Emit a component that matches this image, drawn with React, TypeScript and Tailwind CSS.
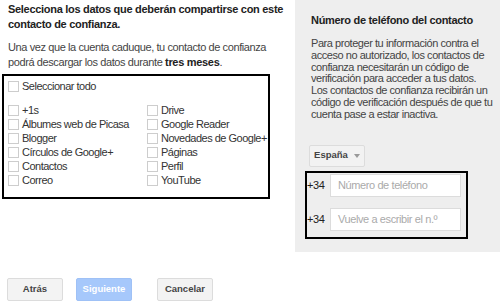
import React from "react";

const Box = () => (
  <span className="inline-block w-[11px] h-[11px] border border-[#cdcdcd] bg-white shrink-0" />
);

const Item = ({ label }: { label: string }) => (
  <div className="flex items-center h-[14px] gap-[3px] whitespace-nowrap">
    <Box />
    <span className="leading-[14px]">{label}</span>
  </div>
);

export default function App() {
  const col1 = ["+1s", "Álbumes web de Picasa", "Blogger", "Círculos de Google+", "Contactos", "Correo"];
  const col2 = ["Drive", "Google Reader", "Novedades de Google+", "Páginas", "Perfil", "YouTube"];
  return (
    <div
      className="w-[500px] h-[306px] bg-white flex flex-col overflow-hidden"
      style={{ fontFamily: '"Liberation Sans", Arial, sans-serif' }}
    >
      <div className="flex h-[252px]">
        <div className="w-[295px] flex flex-col">
          <div className="pl-[8px] pt-[2px] text-[11px] leading-[15px] font-bold tracking-[-0.3px] text-[#222] whitespace-nowrap">
            Selecciona los datos que deberán compartirse con este
            <br />
            contacto de confianza.
          </div>
          <div className="pl-[8px] mt-[8px] text-[11px] leading-[15px] tracking-[-0.4px] text-[#444] whitespace-nowrap">
            Una vez que la cuenta caduque, tu contacto de confianza
            <br />
            podrá descargar los datos durante{" "}
            <span className="font-bold tracking-[-0.3px] text-[#222]">tres meses</span>.
          </div>
          <div className="ml-[2px] mt-[4px] w-[268px] h-[125px] border-2 border-black pl-[4px] pt-[3px] text-[11px] tracking-[-0.5px] text-[#333]">
            <Item label="Seleccionar todo" />
            <div className="flex mt-[10px]">
              <div className="w-[139px] flex flex-col">
                {col1.map((l) => (
                  <Item key={l} label={l} />
                ))}
              </div>
              <div className="flex flex-col">
                {col2.map((l) => (
                  <Item key={l} label={l} />
                ))}
              </div>
            </div>
          </div>
        </div>
        <div className="w-[205px] h-[252px] bg-[#eeeeee] pl-[16px] pr-[4px] pt-[13px]">
          <div className="text-[11px] leading-[14px] font-bold tracking-[-0.3px] text-[#222] whitespace-nowrap">
            Número de teléfono del contacto
          </div>
          <div className="mt-[11px] text-[11px] leading-[11.8px] tracking-[-0.45px] text-[#444] whitespace-nowrap">
            Para proteger tu información contra el
            <br />
            acceso no autorizado, los contactos de
            <br />
            confianza necesitarán un código de
            <br />
            verificación para acceder a tus datos.
            <br />
            Los contactos de confianza recibirán un
            <br />
            código de verificación después de que tu
            <br />
            cuenta pase a estar inactiva.
          </div>
          <div className="mt-[24px] ml-[-2px] w-[56px] h-[22px] bg-[#f2f2f2] border border-[#dcdcdc] rounded-[2px] flex items-center justify-center gap-[6px] text-[9.5px] font-bold text-[#444]">
            <span>España</span>
            <svg width="6" height="4" viewBox="0 0 6 4">
              <path d="M0 0 L6 0 L3 4 Z" fill="#999" />
            </svg>
          </div>
          <div className="mt-[4px] ml-[-6px] w-[163px] h-[68px] border-2 border-black pt-[1px] text-[11px] tracking-[-0.4px] text-[#222]">
            <div className="flex items-center h-[23px]">
              <span className="w-[23px]">+34</span>
              <div className="w-[131px] h-[23px] bg-white border border-[#dcdcdc] pl-[7px] flex items-center text-[#aaa] whitespace-nowrap">
                Número de teléfono
              </div>
            </div>
            <div className="flex items-center h-[23px] mt-[11px]">
              <span className="w-[23px]">+34</span>
              <div className="w-[131px] h-[23px] bg-white border border-[#dcdcdc] pl-[7px] flex items-center text-[#aaa] whitespace-nowrap">
                Vuelve a escribir el n.º
              </div>
            </div>
          </div>
        </div>
      </div>
      <div className="flex mt-[26px] pl-[7px] gap-[13px] text-[9.5px] font-bold">
        <div className="w-[56px] h-[23px] bg-[#f3f3f3] border border-[#dcdcdc] rounded-[2px] flex items-center justify-center text-[#444]">
          Atrás
        </div>
        <div className="w-[56px] h-[23px] bg-[#a6c8fb] border border-[#9fc1f6] rounded-[2px] flex items-center justify-center text-white">
          Siguiente
        </div>
        <div className="ml-[12px] w-[56px] h-[23px] bg-[#f3f3f3] border border-[#dcdcdc] rounded-[2px] flex items-center justify-center text-[#444]">
          Cancelar
        </div>
      </div>
    </div>
  );
}
